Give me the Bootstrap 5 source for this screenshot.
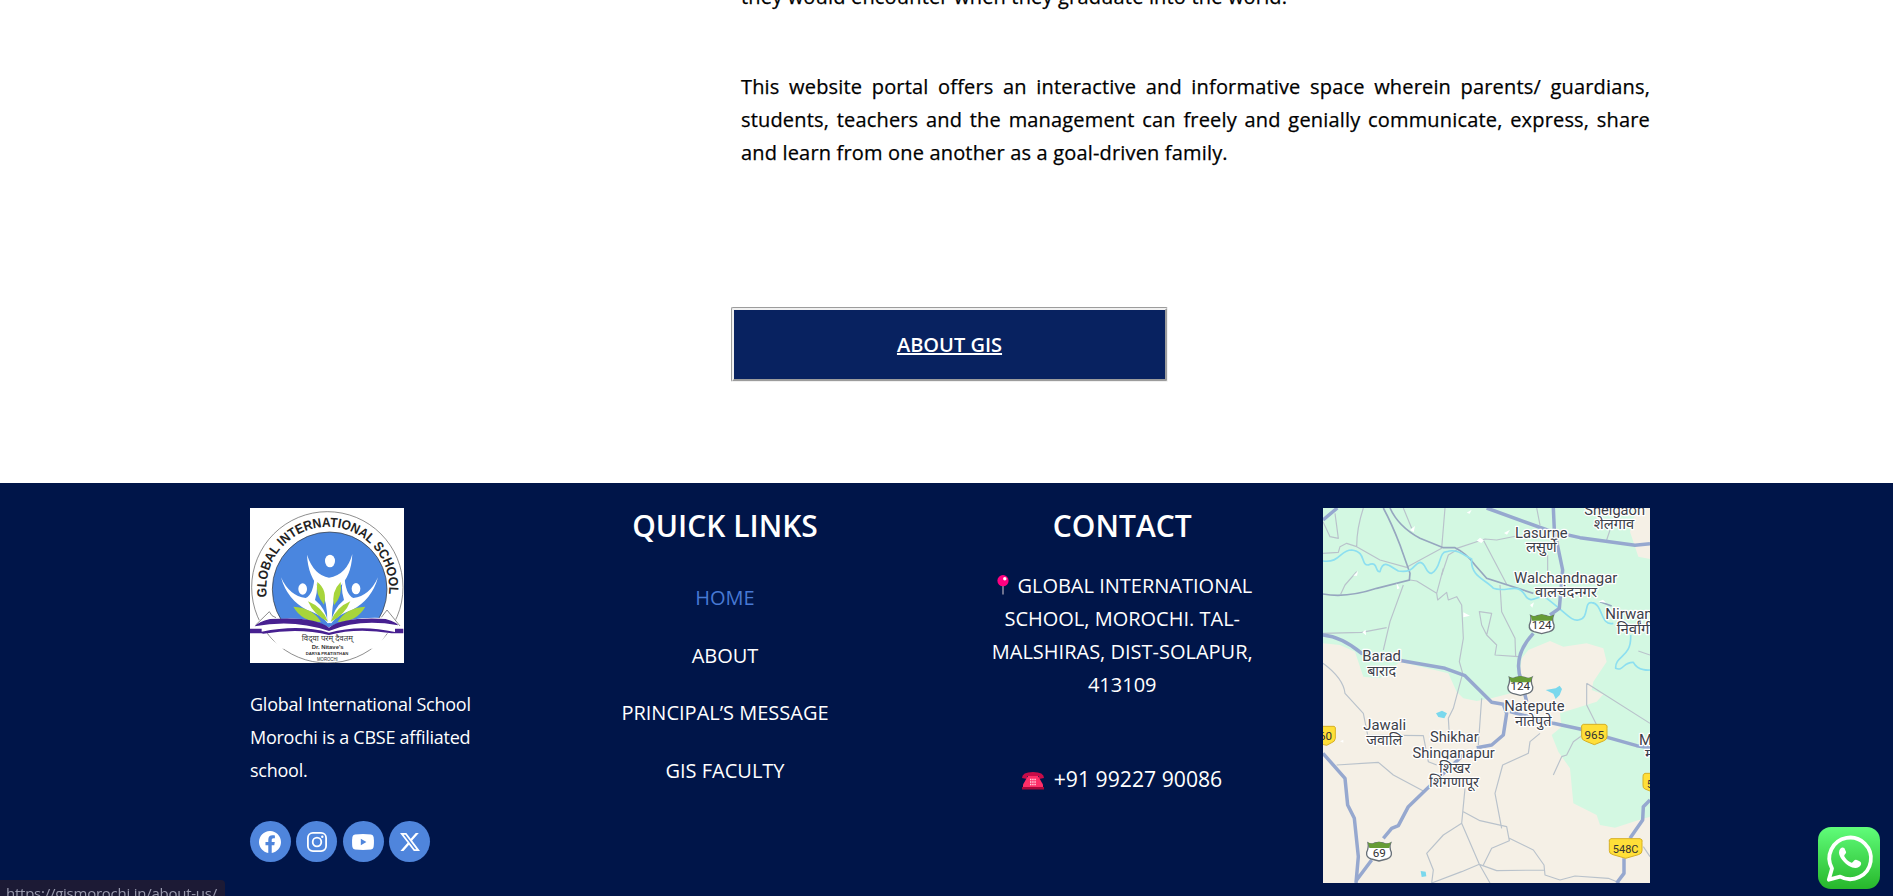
<!DOCTYPE html>
<html lang="en">
<head>
<meta charset="utf-8">
<meta name="viewport" content="width=device-width, initial-scale=1">
<title>Global International School</title>
<link rel="stylesheet" href="https://cdn.jsdelivr.net/npm/bootstrap@5.3.0/dist/css/bootstrap.min.css">
<style>
body{font-family:"Open Sans",sans-serif;color:#000;height:896px;overflow:hidden}
.intro{height:483px;padding-left:741px;width:1650px;overflow:hidden}
.intro p{font-size:20px;line-height:33px;font-weight:500;text-align:justify;margin:0 0 57px;letter-spacing:.17px;-webkit-text-stroke:.25px #000}
.intro p:first-child{margin-top:-20px}
.intro p:nth-child(2){margin-bottom:138px}
.btn-gis{margin-left:-10px;width:437px;height:75px;border:3px groove #f0f0f0;border-radius:2px;background:#082260;color:#fff;font-size:20px;font-weight:600}
.btn-gis:hover{background:#082260;color:#fff}
.site-foot{background:#001549;color:#fff;height:413px;padding:25px 0 0 250px}
.foot-a{width:278.5px}.foot-b{width:393px}.foot-c{width:401.5px}.foot-d{width:327px}
.foot-a p{font-size:18px;line-height:33px;width:240px;margin:25px 0 34px;letter-spacing:-.25px}
.foot-title{font-size:30px;font-weight:600;line-height:36px;margin:0}
.foot-links{gap:30px;padding-top:40px}
.foot-links a{font-size:20px;line-height:27.6px;color:#fff;text-decoration:none}
.foot-links a.now{color:#4779d4}
.addr{font-size:20px;line-height:33px;width:270px;margin:25px auto 0}
.tel{font-size:21.2px;line-height:33px;margin:61px 0 0}
.soc{gap:5.9px}
.soc a{width:40.6px;height:41px;background:#4f85dc;color:#fff}
.pin{width:12px;height:20px;vertical-align:-2px;margin:0 3px 0 5px}
.phone{width:22px;height:18px;vertical-align:-3px;margin-right:4px}
.wa{right:13px;bottom:7px;width:62px;height:62px}
.status{left:0;bottom:-4px;height:20px;width:225px;background:#1c1a35;color:#9899ad;font-size:15px;letter-spacing:-.25px;line-height:20px;padding:3px 0 0 6px;border-radius:0 4px 0 0;white-space:nowrap}
.lbl{font-family:Roboto,"Noto Sans Devanagari","Noto Sans",sans-serif;font-size:45px;fill:#3c4049;stroke:#fff;stroke-width:8px;paint-order:stroke;stroke-linejoin:round;text-anchor:middle}
.shd{font-family:Roboto,sans-serif;font-size:35px;fill:#333;text-anchor:middle}
</style>
<script src="https://cdn.jsdelivr.net/npm/bootstrap@5.3.0/dist/js/bootstrap.bundle.min.js"></script>
</head>
<body>
<main class="intro">
<p>they would encounter when they graduate into the world.</p>
<p>This website portal offers an interactive and informative space wherein parents/ guardians, students, teachers and the management can freely and genially communicate, express, share and learn from one another as a goal-driven family.</p>
<a href="#" class="btn btn-gis d-flex align-items-center justify-content-center text-decoration-underline">ABOUT GIS</a>
</main>
<footer class="site-foot d-flex align-items-start">
<section class="foot-a">
<svg class="d-block" width="154" height="155" viewBox="30 24 462 465" preserveAspectRatio="none">
<rect x="30" y="24" width="462" height="465" fill="#fff"/>
<circle cx="262" cy="262" r="227" fill="none" stroke="#555" stroke-width="2"/>
<circle cx="269" cy="268" r="172" fill="#4a86df" stroke="#333" stroke-width="2"/>
<path d="M38 378 90 333Q100 352 118 357 210 350 266 382 330 350 425 354L441 330 484 378 460 400 440 400 410 446H120L85 400H60Z" fill="#fff"/>
<path d="M46 376 88 335Q94 350 108 353M424 352 441 330 480 378" fill="none" stroke="#555" stroke-width="2"/>
<path id="ring" d="M81 291A184 184 0 1 1 443 303" fill="none"/>
<text font-family="Liberation Sans Narrow,Liberation Sans,sans-serif" font-weight="bold" font-size="40" fill="#222"><textPath href="#ring" textLength="622" lengthAdjust="spacingAndGlyphs">GLOBAL INTERNATIONAL SCHOOL</textPath></text>
<g fill="#fff"><ellipse cx="270" cy="183" rx="15" ry="19"/><ellipse cx="188" cy="267" rx="13" ry="17"/><ellipse cx="348" cy="266" rx="13" ry="17"/>
<path d="M201 164Q221 225 267 233Q320 225 337 162Q334 232 294 264Q276 296 275 369H262Q263 306 242 266Q204 231 201 164Z"/>
<path d="M123 232Q148 288 197 294Q221 284 224 225Q238 260 225 300Q257 325 265 371Q242 342 202 331Q141 299 123 232Z"/>
<path d="M414 232Q389 288 340 294Q316 284 313 225Q299 260 312 300Q280 325 272 371Q295 342 335 331Q396 299 414 232Z"/></g>
<path d="M232 246Q263 270 252 314Q225 283 232 246ZM302 246Q308 288 282 316Q273 275 302 246ZM160 320Q218 323 243 366Q186 366 160 320ZM376 320Q318 323 293 366Q350 366 376 320ZM204 304Q248 322 264 365Q221 344 204 304ZM331 304Q288 322 272 365Q316 344 331 304Z" fill="#a7d53b"/>
<g fill="#472090"><path d="M90 357Q225 348 267 383 310 350 437 357 474 368 474 376 360 355 267 393 160 356 44 379Q55 366 90 357ZM110 366Q190 361 240 374 190 364 110 366Z"/><path d="M30 386H65V395Q180 372 267 398 360 372 465 396V386H490V400H455Q350 382 267 405 180 383 70 401L64 400H30Z"/></g>
<g text-anchor="middle" fill="#333"><text x="262" y="423" font-family="Noto Sans Devanagari,Noto Sans,sans-serif" font-size="24" textLength="153" lengthAdjust="spacingAndGlyphs">विद्‌या परम् दैवतम्</text>
<text x="263" y="447" font-family="Liberation Sans" font-weight="bold" font-size="18" textLength="96" lengthAdjust="spacingAndGlyphs">Dr. Nitave's</text><text x="261" y="465" font-family="Liberation Sans" font-weight="bold" font-size="13" textLength="128" lengthAdjust="spacingAndGlyphs">DARYA PRATISTHAN</text><text x="262" y="482" font-family="Liberation Sans" font-size="14" textLength="62" lengthAdjust="spacingAndGlyphs">MOROCHI</text></g>
</svg>
<p>Global International School Morochi is a CBSE affiliated school.</p>
<div class="soc d-flex">
<a href="#" aria-label="Facebook" class="rounded-circle d-flex align-items-center justify-content-center"><svg width="22" height="22" viewBox="0 0 16 16" fill="currentColor"><path d="M16 8.049c0-4.446-3.582-8.05-8-8.05C3.58 0-.002 3.603-.002 8.05c0 4.017 2.926 7.347 6.75 7.951v-5.625h-2.03V8.05H6.75V6.275c0-2.017 1.195-3.131 3.022-3.131.876 0 1.791.157 1.791.157v1.98h-1.009c-.993 0-1.303.621-1.303 1.258v1.51h2.218l-.354 2.326H9.25V16c3.824-.604 6.75-3.934 6.75-7.951z"/></svg></a>
<a href="#" aria-label="Instagram" class="rounded-circle d-flex align-items-center justify-content-center"><svg width="20" height="20" viewBox="0 0 20 20" fill="none" stroke="currentColor" stroke-width="1.8"><rect x=".9" y=".9" width="18.2" height="18.2" rx="5"/><circle cx="10" cy="10" r="4.3"/><circle cx="15.3" cy="4.7" r="1.2" fill="currentColor" stroke="none"/></svg></a>
<a href="#" aria-label="YouTube" class="rounded-circle d-flex align-items-center justify-content-center"><svg width="22" height="16" viewBox="0 0 22 16"><path d="M3 .5Q11-.3 19 .5 21.2.8 21.6 3 22.3 8 21.6 13 21.2 15.2 19 15.5 11 16.3 3 15.5.8 15.2.4 13-.3 8 .4 3 .8.8 3 .5Z" fill="currentColor"/><path d="m8.8 4.8 5.6 3.2-5.6 3.2Z" fill="#4f85dc"/></svg></a>
<a href="#" aria-label="X" class="rounded-circle d-flex align-items-center justify-content-center"><svg width="20" height="20" viewBox="0 0 16 16" fill="currentColor"><path d="M12.6.75h2.454l-5.36 6.142L16 15.25h-4.937l-3.867-5.07-4.425 5.07H.316l5.733-6.57L0 .75h5.063l3.495 4.633L12.601.75Zm-.86 13.028h1.36L4.323 2.145H2.865z"/></svg></a>
</div>
</section>
<section class="foot-b text-center">
<h2 class="foot-title">QUICK LINKS</h2>
<nav class="foot-links d-flex flex-column align-items-center"><a href="#" class="now">HOME</a><a href="#">ABOUT</a><a href="#">PRINCIPAL’S MESSAGE</a><a href="#">GIS FACULTY</a></nav>
</section>
<section class="foot-c text-center">
<h2 class="foot-title">CONTACT</h2>
<p class="addr"><svg class="pin" viewBox="0 0 12 20"><path d="M6 10v9.5" stroke="#aaa5b5" stroke-width="1.3"/><circle cx="6" cy="5.7" r="5.6" fill="#ff0080"/><circle cx="7.8" cy="3.8" r="1.7" fill="#fff"/></svg> GLOBAL INTERNATIONAL SCHOOL, MOROCHI. TAL-MALSHIRAS, DIST-SOLAPUR, 413109</p>
<p class="tel"><svg class="phone" viewBox="0 0 22 18"><path d="M0 6Q0 0 11 0t11 6L17 7V4H5v3Z" fill="#c70c48"/><path d="M6 4h10l5 8.5v3H1v-3Z" fill="#ff2e68"/><path d="M0 15h22v2.5H0Z" fill="#a9083a"/><path d="M8 7.5h6M8 10h6M8 12.5h6" stroke="#ffd5e2" stroke-width="1.3" stroke-dasharray="1.4 .8"/></svg> +91 99227 90086</p>
</section>
<section class="foot-d">
<svg class="d-block" width="327" height="375" viewBox="9 9 981 1125" preserveAspectRatio="none">
<rect x="9" y="9" width="981" height="1125" fill="#d3f8e2"/>
<g fill="#f5f0e6"><path d="M9 415 60 420 105 440 130 515 180 520 240 470 385 505 410 560 430 580 470 588 520 578 590 560 600 500 605 460 625 435 690 408 730 425 800 415 850 430 860 470 820 530 815 555 850 568 830 590 720 625 725 665 695 690 715 740 750 790 760 895 830 930 840 960 885 968 940 950 990 935V1134H9Z"/><path d="M950 9 930 80 940 110 955 155 990 162V9Z"/></g>
<g fill="none" stroke="#b9c2cb" stroke-width="3.5" stroke-linejoin="round">
<path d="M45 25 55 100 30 95 9 50M9 145 55 142 60 125 80 115 110 125 180 165 260 187 365 130 375 9M130 9Q110 70 110 125M250 9 275 70M410 130 495 102 530 105 590 93M490 105 560 238M370 190 350 265M110 200 75 240 62 268M270 225 290 228 350 265 353 285 380 262 385 285 410 275 425 300 430 400 418 470 428 505 400 610 385 640 388 690"/>
<path d="M410 135 385 150 365 210M250 240 210 350 190 435M9 385 125 382 200 368M478 320 515 325 500 390 485 360ZM500 390 530 420 525 450 595 455M540 240 545 320 585 400 587 455M650 9 660 60M683 150V210M870 75 860 105M9 475Q70 520 75 565L130 625 143 690 310 692 325 770 350 780"/>
<path d="M50 780 175 772 220 810 310 858M485 580 475 720M435 850 425 955 478 1078 510 1134M430 920 480 947 560 965 568 1007 515 1030 490 1080M425 955 370 990 320 1045 340 1095 335 1134M568 1000 640 1035 672 1080 675 1110 720 1125 765 1113 865 1120 900 1134M335 1134 425 1100 478 1078 530 1097 672 1095M660 685 630 710 625 745 548 780 525 865 545 970M800 535V600L830 660 760 710 740 750 725 755 700 810M800 535 990 655M955 438 990 450M970 1025 990 1055"/>
</g>
<g fill="none" stroke="#96a6bf" stroke-width="5"><path d="M190 9Q215 55 240 120L270 205 268 225 170 250Q80 280 9 267M210 9Q235 65 300 100L370 128H405Q440 145 465 180L500 220 640 265M840 290 875 303"/></g>
<g fill="none" stroke="#8ddff0" stroke-width="5" stroke-linejoin="round"><path d="M9 168C60 175 60 135 95 135 140 140 120 180 145 180 175 165 165 205 180 200 190 160 210 185 235 198 285 205 280 175 300 172 320 175 315 205 335 205 365 190 355 140 380 140 410 130 430 150 455 162 450 215 500 225 520 250 560 265 590 230 615 270 635 305 660 260 680 280 740 325 755 350 775 345 810 340 790 290 815 293 850 295 840 365 880 355M932 390C935 460 885 450 887 490 910 500 910 470 940 472 955 500 990 495 990 495"/></g>
<path d="m677 555 30-5 12-8 7 10-7 18-12 12-7-16ZM348 625l18-8 15 8-8 15-18-4ZM302 1098l15 2 2 14-14 2Z" fill="#7ad8ed"/>
<g fill="none" stroke="#96a8cf" stroke-width="10.5" stroke-linejoin="round"><path d="M9 45 52 9M500 9 690 78 780 98 945 121 990 116M700 9 703 75 728 195 718 310 690 330M640 385Q575 455 605 530L620 590M9 390Q65 395 125 445L250 468 375 490 435 512 515 592 550 598 560 625 550 690 515 720 470 728M435 745 320 852 265 905 235 962 215 970 190 1000M155 1065 110 1125M9 745 75 820 83 900 103 940 115 1055 108 1134M570 620 700 655 780 672 865 698 950 722 990 728M990 885 970 905 968 945 930 1000M912 1060V1105L890 1134"/></g>
<g fill="#fff"><path d="m440 23 15-9-6 12ZM270 75l15-12-4 18ZM470 107l10-9 12 8-8 8ZM552 84l18-10-9 15ZM100 212l14-14-3 14ZM230 235l9 15-8 3ZM430 322l20 10-20 5ZM630 300l12-8-5 16ZM127 382l10-8 1 17ZM835 290l14-6 9 9ZM60 709l10-5v9Z"/></g>
<g class="lbl">
<text x="884" y="31" textLength="182" lengthAdjust="spacingAndGlyphs">Shelgaon</text><text x="882" y="73" textLength="121" lengthAdjust="spacingAndGlyphs">शेलगाव</text>
<text x="664" y="98" textLength="158" lengthAdjust="spacingAndGlyphs">Lasurne</text><text x="664" y="140" textLength="92" lengthAdjust="spacingAndGlyphs">लसुर्णे</text>
<text x="737" y="233" textLength="310" lengthAdjust="spacingAndGlyphs">Walchandnagar</text><text x="738" y="277" textLength="186" lengthAdjust="spacingAndGlyphs">वालचंदनगर</text>
<text x="856" y="342" style="text-anchor:start">Nirwangi</text><text x="890" y="386" style="text-anchor:start">निर्वांगी</text>
<text x="185" y="469" textLength="116" lengthAdjust="spacingAndGlyphs">Barad</text><text x="185" y="513" textLength="87" lengthAdjust="spacingAndGlyphs">बाराद</text>
<text x="643" y="619" textLength="181" lengthAdjust="spacingAndGlyphs">Natepute</text><text x="640" y="663" textLength="110" lengthAdjust="spacingAndGlyphs">नातेपुते</text>
<text x="194" y="675" textLength="128" lengthAdjust="spacingAndGlyphs">Jawali</text><text x="193" y="719" textLength="108" lengthAdjust="spacingAndGlyphs">जवालि</text>
<text x="403" y="712" textLength="146" lengthAdjust="spacingAndGlyphs">Shikhar</text><text x="401" y="758" textLength="247" lengthAdjust="spacingAndGlyphs">Shinganapur</text><text x="404" y="803" textLength="94" lengthAdjust="spacingAndGlyphs">शिखर</text><text x="402" y="846" textLength="150" lengthAdjust="spacingAndGlyphs">शिंगणापूर</text>
<text x="957" y="720" style="text-anchor:start">M</text><text x="975" y="762" style="text-anchor:start">म</text>
</g>
<g fill="#fff" stroke="#687078" stroke-width="4"><path id="us" d="M632 332Q642 338 652 332L665 330 678 332Q690 338 700 332 695 344 702 360 704 375 688 380L665 386 642 380Q626 375 628 360 635 344 632 332Z"/><use href="#us" x="-64" y="185"/><use href="#us" x="-488" y="682"/></g>
<g fill="#669c35"><path id="cap" d="M632 330Q642 337 652 332L665 328 678 332Q690 337 700 330L696 347H636Z"/><use href="#cap" x="-64" y="185"/><use href="#cap" x="-488" y="682"/></g>
<g fill="#ffdf38" stroke="#d6af25" stroke-width="3"><path d="M-15 664H42Q48 665 46 675V700Q45 710 35 713L20 721-15 713ZM790 658H855Q864 660 861 670V695Q861 704 850 708L823 719 796 708Q784 704 785 695V670Q782 660 790 658ZM873 1001H960Q969 1003 966 1012V1037Q966 1046 955 1049L917 1060 879 1049Q867 1046 868 1037V1012Q865 1003 873 1001ZM975 805H1050V858L1000 862 975 852Q968 850 969 840V815Q968 807 975 805Z"/></g>
<g class="shd"><text x="665" y="371">124</text><text x="601" y="556">124</text><text x="178" y="1055">69</text><text x="823" y="702">965</text><text x="917" y="1043" textLength="77" lengthAdjust="spacingAndGlyphs">548C</text><text x="36" y="705" style="text-anchor:end">60</text><text x="980" y="848" style="text-anchor:start">5</text></g>
</svg>
</section>
</footer>
<a href="#" class="wa position-fixed" aria-label="WhatsApp"><svg class="d-block" width="62" height="62" viewBox="0 0 62 62"><defs><linearGradient id="wg" x2="0" y2="1"><stop stop-color="#60fd7a"/><stop offset="1" stop-color="#27b72b"/></linearGradient></defs><rect width="62" height="62" rx="13" fill="url(#wg)"/><path d="M10.8 52.7 14 41.5A20.8 20.8 0 1 1 22.2 49.6Z" fill="none" stroke="#fff" stroke-width="3.8" stroke-linejoin="round"/><path d="M24.6 20.5C23 20 21.2 22.3 21 25.5 21 30 26 36 31 39 36 42 41.500 41.500 43 37.500 43.700 35 42 34.500 38 32.800 36 32.200 35 36 33.500 35.700 30 34.500 27.500 31.500 26.300 29.200 26 27.500 28.600 26.500 28 24.700L26.300 21Z" fill="#fff"/></svg></a>
<div class="status position-fixed">https://gismorochi.in/about-us/</div>
</body>
</html>
